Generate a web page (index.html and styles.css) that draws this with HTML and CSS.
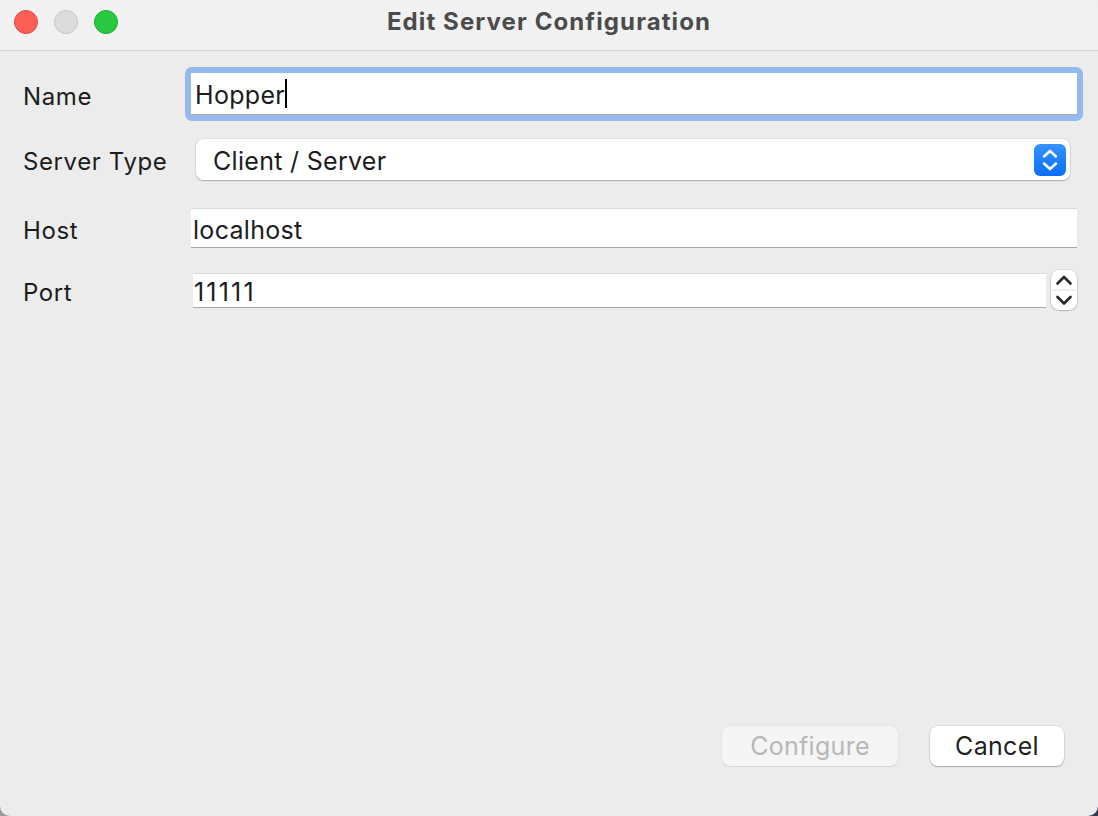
FILE: index.html
```html
<!DOCTYPE html>
<html lang="en">
<head>
  <meta charset="UTF-8">
  <meta name="viewport" content="width=device-width, initial-scale=1.0">
  <title>Edit Server Configuration</title>
  <link rel="stylesheet" href="styles.css">
</head>
<body>
  <div class="window">
    <header class="titlebar">
      <div class="lights">
        <span class="light close"></span>
        <span class="light minimize"></span>
        <span class="light zoom"></span>
      </div>
      <h1 class="title">Edit Server Configuration</h1>
    </header>

    <main class="content">
      <div class="form">
        <div class="row row-name">
          <label class="label">Name</label>
          <div class="focus-ring">
            <div class="text-field">Hopper<span class="caret"></span></div>
          </div>
        </div>

        <div class="row row-type">
          <label class="label">Server Type</label>
          <div class="popup">
            <span class="popup-value">Client / Server</span>
            <span class="popup-arrows">
              <svg width="32" height="32" viewBox="0 0 32 32">
                <path d="M10 12.5 L16 7 L22 12.5" />
                <path d="M10 19.5 L16 25 L22 19.5" />
              </svg>
            </span>
          </div>
        </div>

        <div class="row row-host">
          <label class="label">Host</label>
          <div class="text-field plain">localhost</div>
        </div>

        <div class="row row-port">
          <label class="label">Port</label>
          <div class="text-field plain number">11111</div>
          <div class="stepper">
            <svg width="26" height="40" viewBox="0 0 26 40">
              <path class="stepper-line" d="M1 20 H25" />
              <path d="M6.5 13.5 L13 7 L19.5 13.5" />
              <path d="M6.5 27 L13 33.5 L19.5 27" />
            </svg>
          </div>
        </div>
      </div>

      <div class="actions">
        <button class="btn" disabled>Configure</button>
        <button class="btn">Cancel</button>
      </div>
    </main>
  </div>
</body>
</html>
```

FILE: styles.css
```css
html, body {
  margin: 0;
  height: 100%;
}
body {
  font-family: Inter, "Noto Sans", Arial, sans-serif;
  background:
    linear-gradient(to bottom, #efefef 0 50%, transparent 50%),
    linear-gradient(to right, #9c9c9c, #343a52);
  overflow: hidden;
}
.window {
  height: 816px;
  width: 1098px;
  display: flex;
  flex-direction: column;
  background: #ececec;
  border-radius: 10px;
  overflow: hidden;
}

/* title bar */
.titlebar {
  position: relative;
  height: 51px;
  flex: none;
  background: #f1f1f1;
  border-bottom: 1px solid #d4d4d4;
  display: flex;
  align-items: center;
  justify-content: center;
  padding-bottom: 8px;
  box-sizing: border-box;
}
.lights {
  position: absolute;
  left: 14px;
  top: 10px;
  display: flex;
  gap: 16px;
}
.light {
  width: 22px;
  height: 22px;
  border-radius: 50%;
  border: 1px solid;
}
.close {
  background: #fe5f57;
  border-color: #e2463f;
}
.minimize {
  background: #dcdcdc;
  border-color: #c4c4c4;
}
.zoom {
  background: #28c840;
  border-color: #1eab2f;
}
.title {
  margin: 0;
  font-size: 24px;
  font-weight: 700;
  letter-spacing: 1.1px;
  color: #4b4b4b;
}

/* form */
.content {
  flex: 1;
  display: flex;
  flex-direction: column;
  padding: 16px 15px 50px 23px;
  color: #1c1c1c;
  font-size: 25px;
  letter-spacing: 0.3px;
}
.form {
  display: flex;
  flex-direction: column;
}
.row {
  display: flex;
  align-items: center;
}
.label {
  width: 162px;
  flex: none;
  font-size: 24px;
  letter-spacing: 0.6px;
  padding-top: 4px;
}
.row-name {
  height: 54px;
}
.row-type {
  height: 41px;
  margin-top: 18px;
}
.row-host {
  height: 40px;
  margin-top: 28px;
}
.row-port {
  height: 40px;
  margin-top: 22px;
}

.focus-ring {
  flex: 1;
  align-self: stretch;
  padding: 6px;
  background: #93b9ef;
  border-radius: 7px;
  display: flex;
}
.text-field {
  flex: 1;
  display: flex;
  align-items: center;
  background: #fff;
  border-bottom: 1px solid #a9a9a9;
  padding: 2px 0 0 4px;
}
.caret {
  display: inline-block;
  width: 2px;
  height: 29px;
  margin-top: -2px;
  background: #000;
}
.row-host .text-field {
  align-self: stretch;
  margin-left: 6px;
  margin-right: 6px;
  border-top: 1px solid #d9d9d9;
  padding: 3px 0 0 2px;
}
.row-port .text-field {
  height: 35px;
  box-sizing: border-box;
  margin-left: 8px;
  border-top: 1px solid #d9d9d9;
  padding: 3px 0 0 1px;
}
.number {
  letter-spacing: 2.2px;
}

.popup {
  flex: 1;
  align-self: stretch;
  margin-left: 11px;
  margin-right: 13px;
  display: flex;
  align-items: center;
  justify-content: space-between;
  background: #fff;
  border-radius: 7px;
  box-shadow: 0 0 0 0.5px rgba(0, 0, 0, 0.12), 0 1px 1.5px rgba(0, 0, 0, 0.22);
  padding: 0 4px 0 17px;
}
.popup-value {
  padding-top: 3px;
}
.popup-arrows {
  width: 32px;
  height: 32px;
  border-radius: 6px;
  background: linear-gradient(#3592ff, #0a6ff5);
  display: flex;
}
.popup-arrows path {
  fill: none;
  stroke: #fff;
  stroke-width: 2.5;
  stroke-linecap: round;
  stroke-linejoin: round;
}

.stepper {
  width: 26px;
  height: 40px;
  margin-left: 5px;
  margin-right: 6px;
  border-radius: 8px;
  background: #fff;
  box-shadow: 0 0 0 0.5px rgba(0, 0, 0, 0.14), 0 1px 1.5px rgba(0, 0, 0, 0.2);
  display: flex;
}
.stepper path {
  fill: none;
  stroke: #2a2a2a;
  stroke-width: 2.7;
  stroke-linecap: round;
  stroke-linejoin: round;
}
.stepper .stepper-line {
  stroke: #e0e0e0;
  stroke-width: 1;
}

/* buttons */
.actions {
  margin-top: auto;
  display: flex;
  justify-content: flex-end;
  gap: 32px;
  padding-right: 19px;
}
.btn {
  height: 40px;
  border: none;
  border-radius: 8px;
  font-family: inherit;
  font-size: 25px;
  letter-spacing: 0.3px;
  color: #1f1f1f;
  background: #fff;
  box-shadow: 0 0 0 0.5px rgba(0, 0, 0, 0.12), 0 1px 1.5px rgba(0, 0, 0, 0.24);
  width: 134px;
}
.btn:disabled {
  width: 176px;
  color: #b8b8b8;
  background: #f5f5f5;
  box-shadow: 0 0 0 0.5px rgba(0, 0, 0, 0.06), 0 1px 1px rgba(0, 0, 0, 0.08);
}
```
